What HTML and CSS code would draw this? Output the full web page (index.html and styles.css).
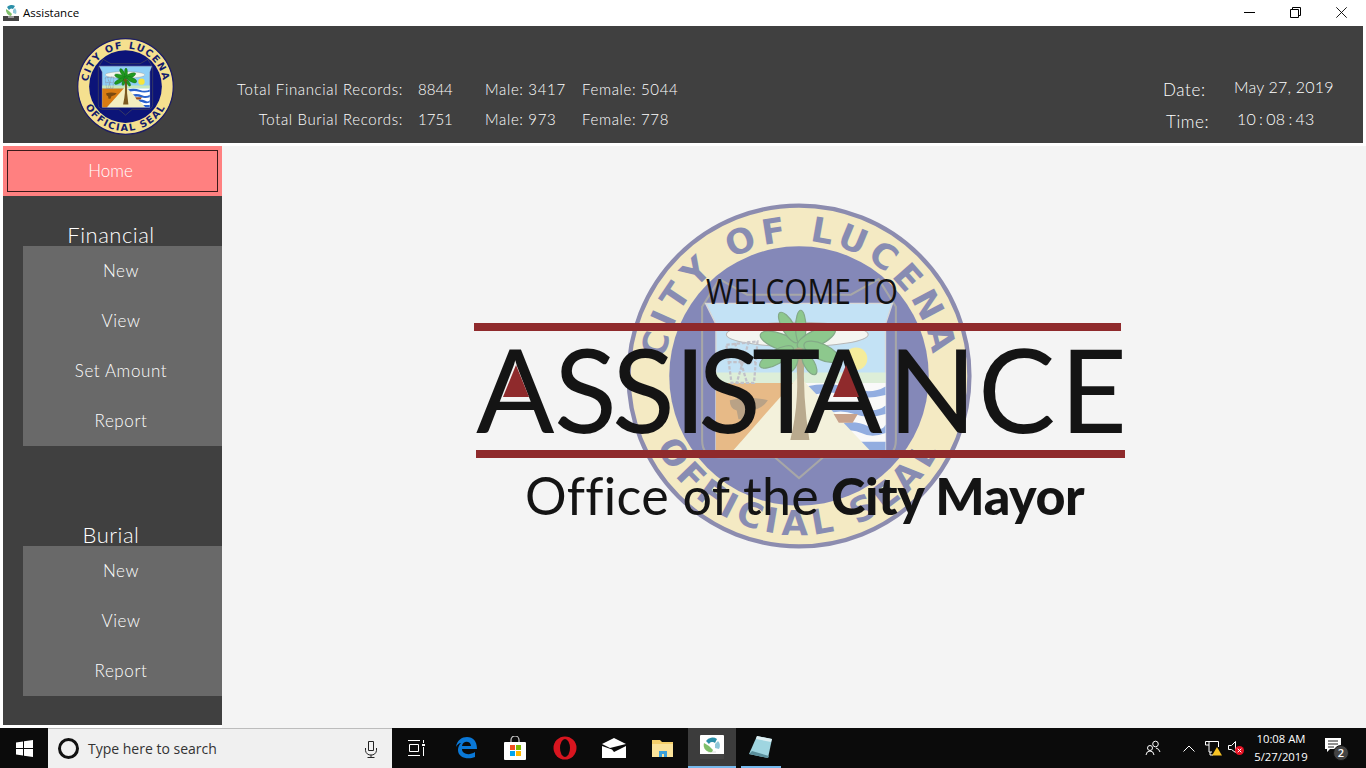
FILE: index.html
```html
<!DOCTYPE html>
<html>
<head>
	<meta charset="utf-8">
	<title>Assistance</title>
	<link rel="stylesheet" href="styles.css">
</head>
<body>
	<svg class="defs" width="0" height="0">
		<symbol id="seal" viewBox="0 0 200 200">
			<circle cx="100" cy="100" r="98.500" fill="#f5e08f" stroke="#1c1c66" stroke-width="2.500"/>
			<circle cx="100" cy="100" r="75" fill="#0c1478"/>
			<path id="arcTop" fill="none" d="M100 178A78 78 0 1 1 100.010 178"/>
			<path id="arcBottom" fill="none" d="M100 8A92 92 0 1 0 100.010 8"/>
			<text class="seal-text"><textPath href="#arcTop" startOffset="50%" text-anchor="middle">CITY OF LUCENA</textPath></text>
			<text class="seal-text"><textPath href="#arcBottom" startOffset="50%" text-anchor="middle">OFFICIAL SEAL</textPath></text>
			<path d="M44 60L54 44L70 53H130L146 44L156 60V137Q156 147 146 147H114L100 159L86 147H54Q44 147 44 137Z" fill="#0c1478" stroke="#555" stroke-width="1.200"/>
			<path d="M46 58H154L150 70V143H52V70Z" fill="#8fd0f7" stroke="#bbb" stroke-width=".8"/>
			<ellipse cx="99" cy="76" rx="41" ry="7" fill="#f4f7ee" stroke="#777" stroke-width=".6"/>
			<path d="M52 98H150V104H52Z" fill="#c6e8bb"/>
			<path d="M52 104H100L62 143H52Z" fill="#d97c12"/>
			<path d="M100 104H150V143H140Z" fill="#fff"/>
			<path d="M104 106Q118 103 130 107T150 106V111Q138 114 128 111T108 111ZM112 117Q124 114 134 118T150 117V122Q140 125 132 122T116 122ZM122 128Q132 125 140 129T150 128V133Q142 136 136 133T126 133ZM132 138H150V143H137Z" fill="#2a62cc"/>
			<path d="M100 100L141 143H62Z" fill="#f3efc0"/>
			<circle cx="133" cy="90" r="6.500" fill="#f7e53c"/>
			<path d="M58 82L76 80L74 104H61ZM63 81L70 104M71 80L64 104M59 92H75" fill="none" stroke="#8b8b9c" stroke-width="1.300" stroke-dasharray="2 1"/>
			<path d="M60 114q10-3 22 0q-4 6-11 6l-2 5h-4l-1-5q-4-1-4-6Z" fill="#7a4a10"/>
			<path d="M98 88Q101 112 95 137H106Q102 112 103 88Z" fill="#7b5a20"/>
			<g fill="#1f9a1f" stroke="#0a5a12" stroke-width=".7">
				<ellipse cx="89" cy="80" rx="12" ry="4.500" transform="rotate(20 89 80)"/>
				<ellipse cx="87" cy="89" rx="11" ry="4" transform="rotate(-30 87 89)"/>
				<ellipse cx="94" cy="72" rx="10" ry="3.500" transform="rotate(60 94 72)"/>
				<ellipse cx="101" cy="72" rx="10" ry="3" transform="rotate(90 101 72)"/>
				<ellipse cx="110" cy="78" rx="12" ry="4.500" transform="rotate(-25 110 78)"/>
				<ellipse cx="113" cy="86" rx="11" ry="4.500" transform="rotate(25 113 86)"/>
				<ellipse cx="96" cy="92" rx="6" ry="3" transform="rotate(-70 96 92)"/>
				<ellipse cx="106" cy="93" rx="7" ry="3" transform="rotate(60 106 93)"/>
			</g>
			<circle cx="100" cy="87" r="3.500" fill="#6b5a1a"/>
			<path d="M120 122h14l-3 5h-8Z" fill="#9a4a1a"/>
		</symbol>
	</svg>

	<div class="titlebar">
		<svg class="title-icon" width="18" height="18" viewBox="0 0 18 18">
			<rect x="1" y="13" width="16" height="5" fill="#444"/>
			<path d="M6 14h6" stroke="#eee"/>
			<path d="M5 4a6 6 0 0 1 8-1l-2 3a3 3 0 0 0-4 1Z" fill="#2b8fa8"/>
			<path d="M4 6l3 2 3 3-1 2a6 6 0 0 1-5-7Z" fill="#7fbf6a"/>
			<path d="M13 5a6 6 0 0 1 1 6l-3-1 0-3Z" fill="#8fc7d8"/>
		</svg>
		<span class="title-name">Assistance</span>
		<div class="window-btns">
			<svg width="11" height="11" viewBox="0 0 11 11"><path d="M0 5.500H11" stroke="#000"/></svg>
			<svg width="11" height="11" viewBox="0 0 11 11"><path d="M.5 2.500H8.500V10.500H.5ZM2.500 2.500V.5H10.500V8.500H8.500" fill="none" stroke="#000"/></svg>
			<svg width="11" height="11" viewBox="0 0 11 11"><path d="M.3.3L10.700 10.700M10.700.3L.3 10.700" stroke="#000" stroke-width=".9"/></svg>
		</div>
	</div>

	<header class="header">
		<svg class="header-seal"><use href="#seal"/></svg>
		<div class="totals">
			<span class="total-label">Total Financial Records:</span><span class="total-count">8844</span><span>Male: 3417</span><span>Female: 5044</span>
			<span class="total-label">Total Burial Records:</span><span class="total-count">1751</span><span>Male: 973</span><span>Female: 778</span>
		</div>
		<div class="clock">
			<span class="clock-label">Date:</span><span class="clock-value">May 27, 2019</span>
			<span class="clock-label clock-label-time">Time:</span><span class="clock-value clock-time">10 : 08 : 43</span>
		</div>
	</header>

	<div class="main">
		<nav class="sidebar">
			<div class="home-band"><button class="home-btn">Home</button></div>
			<div class="group-title">Financial</div>
			<div class="submenu">
				<a>New</a>
				<a>View</a>
				<a>Set Amount</a>
				<a>Report</a>
			</div>
			<div class="group-title group-second">Burial</div>
			<div class="submenu">
				<a>New</a>
				<a>View</a>
				<a>Report</a>
			</div>
		</nav>
		<section class="content">
			<div class="welcome">
				<svg class="welcome-seal"><use href="#seal"/></svg>
				<svg class="wordmark" width="660" height="260" viewBox="0 0 660 260">
					<text class="wm-welcome" x="236" y="101" textLength="192" lengthAdjust="spacingAndGlyphs">WELCOME TO</text>
					<rect x="4" y="120" width="647" height="8" fill="#8f2a2c"/>
					<text class="wm-title" y="230" x="6 84 142 204 228 282 334 418 508 590">ASSISTANCE</text>
					<polygon points="46,162 33,194 59,194" fill="#8f2a2c"/>
					<polygon points="376,162 363,194 389,194" fill="#8f2a2c"/>
					<rect x="6" y="247" width="649" height="8" fill="#8f2a2c"/>
				</svg>
				<div class="office"><span class="office-light">Office of the</span> <b>City Mayor</b></div>
			</div>
		</section>
	</div>

	<footer class="taskbar">
		<div class="start">
			<svg width="17" height="17" viewBox="0 0 17 17"><path d="M0 2.400L7 1.400V8H0ZM8 1.300L17 0V8H8ZM0 9H7V15.600L0 14.600ZM8 9H17V17L8 15.700Z" fill="#fff"/></svg>
		</div>
		<div class="search">
			<span class="cortana"></span>
			<span class="search-text">Type here to search</span>
			<svg class="mic" width="14" height="18" viewBox="0 0 14 18"><path d="M4.500 1.500h5v9h-5ZM1.500 8v2.500a5 5 0 0 0 5.500 4.500a5 5 0 0 0 5.500-4.500V8M7 15v2.500M3.500 17.500h7" fill="none" stroke="#222"/></svg>
		</div>
		<div class="tasks">
			<div class="task">
				<svg width="18" height="16" viewBox="0 0 18 16"><path d="M0 .5H12M0 15.500H12M1.500 4.500H10.500V11.500H1.500ZM15.500 0V3M15.500 7V16" fill="none" stroke="#fff"/><rect x="14" y="4" width="3" height="2" fill="#fff"/></svg>
			</div>
			<div class="task">
				<svg width="22" height="22" viewBox="0 0 22 22"><path d="M1 10C2 3 7 0 12 0c6 0 10 4 10 12H7c0 5 7 7 13 3v5c-7 3-17 1-17-7 0-3 1-5 3-7-2 0-4 2-5 4Zm6-1h9c0-5-8-6-9 0Z" fill="#0a78d7"/></svg>
			</div>
			<div class="task">
				<svg width="24" height="24" viewBox="0 0 24 24"><path d="M8 7V4a4 4 0 0 1 8 0v3" fill="none" stroke="#ccc" stroke-width="1.200"/><rect x="1" y="6" width="22" height="18" rx="1" fill="#fff"/><rect x="7" y="9" width="5" height="5" fill="#f25022"/><rect x="13" y="9" width="5" height="5" fill="#7fba00"/><rect x="7" y="15" width="5" height="5" fill="#00a4ef"/><rect x="13" y="15" width="5" height="5" fill="#ffb900"/></svg>
			</div>
			<div class="task">
				<svg width="24" height="24" viewBox="0 0 24 24"><circle cx="12" cy="12" r="11.500" fill="#d8151f"/><ellipse cx="12" cy="12" rx="5" ry="9" fill="#0b0b0b"/></svg>
			</div>
			<div class="task">
				<svg width="24" height="20" viewBox="0 0 24 20"><path d="M0 6L12 0L24 6L8 10Z" fill="#fff"/><path d="M0 8V20H24V8L12 14L10 11.500Z" fill="#fff"/></svg>
			</div>
			<div class="task">
				<svg width="22" height="20" viewBox="0 0 22 20"><path d="M0 2H8L10 4H21V19H0Z" fill="#f5cf6a"/><path d="M0 6H21V19H0Z" fill="#fbe39a"/><path d="M7 19V13H15V19H12V16H10V19Z" fill="#3aa0dc"/></svg>
			</div>
			<div class="task task-active">
				<svg width="24" height="24" viewBox="0 0 24 24"><rect width="24" height="24" rx="1" fill="#fff"/><rect y="19" width="24" height="5" fill="#444"/><path d="M8 17h8" stroke="#ddd"/><path d="M6 6a8 8 0 0 1 11-2l-2 4a4 4 0 0 0-6 1Z" fill="#2b8fa8"/><path d="M4 8l5 3 4 4-1 2a7 7 0 0 1-8-9Z" fill="#7fbf6a"/><path d="M18 6a7 7 0 0 1 1 8l-4-1 0-4Z" fill="#8fc7d8"/></svg>
			</div>
			<div class="task task-open">
				<svg width="24" height="24" viewBox="0 0 24 24"><path d="M8 1L23 4L19 23L0 19Z" fill="#9fd5e0"/><path d="M8 1L23 4L22 7L7 4Z" fill="#dfeff2"/><path d="M0 19L19 23L20 21L3 16Z" fill="#5b8f9c"/></svg>
			</div>
		</div>
		<div class="tray">
			<svg class="tray-people" width="16" height="16" viewBox="0 0 16 16"><circle cx="10.500" cy="4" r="2.800" fill="none" stroke="#fff"/><circle cx="5" cy="8" r="2.500" fill="none" stroke="#fff"/><path d="M1 15q.5-4 4-4t4 4M11 8q3 .5 4 4" fill="none" stroke="#fff"/></svg>
			<svg class="tray-chevron" width="12" height="7" viewBox="0 0 12 7"><path d="M.5 6.500L6 1l5.500 5.500" fill="none" stroke="#fff"/></svg>
			<svg class="tray-network" width="18" height="16" viewBox="0 0 18 16"><path d="M1.500 1.500H14.500V7M5 1.500V5H1.500V1.500M5 5V12H8M6 12V15H9" fill="none" stroke="#fff"/><path d="M13 7L18 15.500H8Z" fill="#f7c325"/></svg>
			<svg class="tray-volume" width="16" height="14" viewBox="0 0 16 14"><path d="M.5 4.500H3.500L7.500.5V11.500L3.500 8.500H.5Z" fill="none" stroke="#fff"/><circle cx="11.500" cy="9.500" r="4.500" fill="#e81123"/><path d="M9.700 7.700L13.300 11.300M13.300 7.700L9.700 11.300" stroke="#fff"/></svg>
			<div class="tray-clock"><span>10:08 AM</span><span>5/27/2019</span></div>
			<div class="notify">
				<svg width="16" height="14" viewBox="0 0 16 14"><path d="M0 0H16V11H5L2 14V11H0Z" fill="#fff"/><path d="M3 3H13M3 6H13M3 9H9" stroke="#222"/></svg>
				<span class="notify-badge">2</span>
			</div>
		</div>
	</footer>
</body>
</html>
```

FILE: styles.css
```css
* {
	box-sizing: border-box;
}

body {
	margin: 0;
	width: 1366px;
	height: 768px;
	overflow: hidden;
	background-color: #fff;
	font-family: "Lato", "Liberation Sans", sans-serif;
	display: flex;
	flex-direction: column;
}

.defs {
	position: absolute;
}

.seal-text {
	font-family: "DejaVu Sans", sans-serif;
	font-weight: bold;
	font-size: 20px;
	letter-spacing: 3px;
	fill: #141c6c;
}

.titlebar {
	height: 26px;
	display: flex;
	align-items: center;
	padding: 0 0 2px 2px;
	flex: none;
}

.title-icon {
	margin-right: 3px;
}

.title-name {
	font-family: "Open Sans", sans-serif;
	font-size: 11.5px;
	color: #000;
}

.window-btns {
	margin-left: auto;
	display: flex;
	gap: 35px;
	padding-right: 19px;
}

.header {
	flex: none;
	height: 117px;
	margin: 0 3px;
	background-color: #404040;
	color: #fff;
	display: flex;
	font-weight: 300;
}

.header-seal {
	width: 97px;
	height: 97px;
	margin: 12px 0 0 74px;
}

.totals {
	display: grid;
	grid-template-columns: 173px 82px 97px auto;
	grid-auto-rows: 30px;
	margin: 48px 0 0 56px;
	font-size: 15px;
	line-height: 30px;
	letter-spacing: .65px;
	white-space: nowrap;
}

.total-label {
	text-align: right;
}

.total-count {
	padding-left: 15px;
	letter-spacing: 0;
}

.clock {
	margin: 45px 29px 0 auto;
	display: grid;
	grid-template-columns: 71px 100px;
	grid-auto-rows: 32px;
	font-size: 17px;
	line-height: 32px;
	letter-spacing: .6px;
	white-space: nowrap;
}

.clock-label {
	padding-top: 3px;
}

.clock-label-time {
	padding-left: 3px;
}

.clock-value {
	font-size: 16px;
	letter-spacing: .2px;
}

.clock-time {
	padding-left: 3px;
	word-spacing: -1.4px;
}

.main {
	flex: none;
	height: 582px;
	margin-top: 3px;
	display: flex;
}

.sidebar {
	width: 219px;
	height: 579px;
	margin-left: 3px;
	background-color: #404040;
	color: #fff;
	font-weight: 300;
}

.home-band {
	height: 50px;
	padding: 4px;
	background-color: #ff8080;
}

.home-btn {
	width: 211px;
	height: 42px;
	display: block;
	padding: 0 4px 2px 0;
	background-color: #ff8080;
	border: 1px solid #3d1a1a;
	color: #fff;
	font-family: inherit;
	font-weight: 300;
	font-size: 17px;
}

.group-title {
	height: 50px;
	font-size: 22px;
	line-height: 26px;
	padding: 26px 3px 0 0;
	text-align: center;
	letter-spacing: .5px;
}

.group-second {
	height: 100px;
	padding-top: 76px;
}

.submenu {
	margin-left: 20px;
	padding-right: 3px;
	background-color: #696969;
}

.submenu a {
	display: block;
	height: 50px;
	line-height: 50px;
	text-align: center;
	font-size: 17px;
	letter-spacing: .6px;
}

.content {
	flex: 1;
	background-color: #f4f4f4;
	position: relative;
}

.welcome {
	position: absolute;
	left: 0;
	top: 0;
	width: 100%;
	height: 100%;
}

.welcome-seal {
	position: absolute;
	left: 404px;
	top: 57px;
	width: 346px;
	height: 346px;
	opacity: .48;
}

.wordmark {
	position: absolute;
	left: 248px;
	top: 57px;
}

.wm-welcome {
	font-family: "Open Sans", sans-serif;
	font-weight: 400;
	font-size: 35px;
	fill: #111;
}

.wm-title {
	font-family: "Lato", sans-serif;
	font-weight: 400;
	font-size: 116px;
	fill: #141414;
}

.office {
	position: absolute;
	left: 303px;
	top: 314px;
	white-space: nowrap;
	line-height: 70px;
	color: #141414;
}

.office-light {
	font-size: 52px;
	letter-spacing: .3px;
}

.office b {
	font-size: 52px;
	font-weight: 900;
	letter-spacing: -.4px;
	margin-left: 8px;
}

.taskbar {
	flex: none;
	height: 40px;
	background-color: #0b0b0b;
	display: flex;
	align-items: center;
	color: #fff;
}

.start {
	width: 48px;
	height: 40px;
	display: flex;
	align-items: center;
	justify-content: center;
}

.search {
	width: 344px;
	height: 40px;
	background-color: #f0f0f0;
	border-top: 1px solid #bcbcbc;
	display: flex;
	align-items: center;
	padding-left: 10px;
}

.cortana {
	width: 21px;
	height: 21px;
	border-radius: 50%;
	border: 3px solid #111;
	margin-right: 9px;
}

.search-text {
	font-family: "Open Sans", sans-serif;
	font-size: 14px;
	color: #333;
}

.mic {
	margin-left: auto;
	margin-right: 14px;
}

.tasks {
	display: flex;
	height: 40px;
}

.task {
	width: 49.3px;
	height: 40px;
	display: flex;
	align-items: center;
	justify-content: center;
}

.task-active {
	background-color: #3c3c3c;
	border-bottom: 2px solid #76b9ed;
	width: 48px;
}

.task-open {
	width: 40px;
	margin-left: 5px;
	border-bottom: 2px solid #76b9ed;
}

.tray {
	margin-left: auto;
	display: flex;
	align-items: center;
	height: 40px;
	padding-right: 17px;
}

.tray-people {
	margin-right: 22px;
}

.tray-chevron {
	margin-right: 9px;
}

.tray-network {
	margin-right: 6px;
}

.tray-volume {
	margin-right: 1px;
}

.tray-clock {
	width: 72px;
	display: flex;
	flex-direction: column;
	text-align: center;
	font-family: "Open Sans", sans-serif;
	font-size: 11.3px;
	line-height: 18px;
}

.notify {
	position: relative;
	margin-left: 8px;
	width: 24px;
	height: 24px;
}

.notify-badge {
	position: absolute;
	left: 8px;
	top: 9px;
	width: 16px;
	height: 16px;
	border-radius: 50%;
	background-color: #444;
	border: 1px solid #111;
	font-family: "Open Sans", sans-serif;
	font-size: 11px;
	font-weight: 600;
	line-height: 14px;
	text-align: center;
}
```
